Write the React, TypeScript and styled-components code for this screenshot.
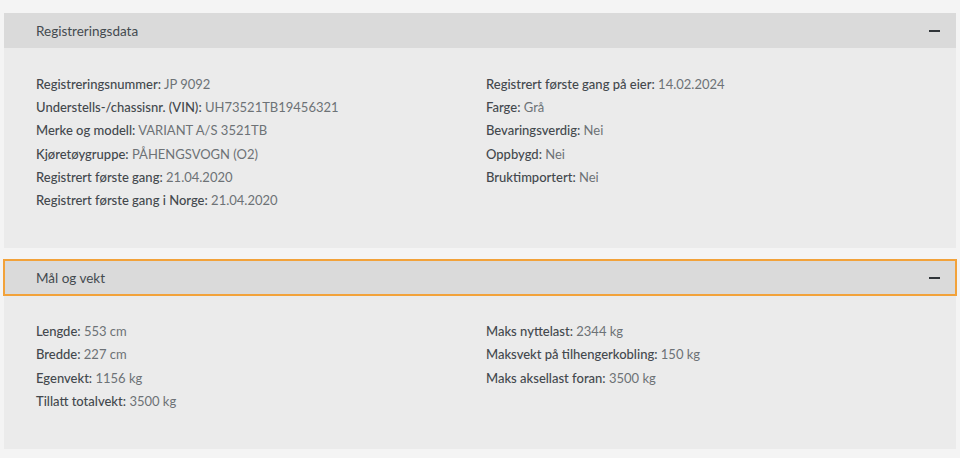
import React from "react";
import styled, { createGlobalStyle } from "styled-components";

const Global = createGlobalStyle`
  html, body { margin: 0; padding: 0; background: #f4f4f4; }
  body { font-family: Lato, "Noto Sans", sans-serif; }
`;

const Page = styled.div`
  padding: 13px 4px 10px 4px;
  display: flex;
  flex-direction: column;
  gap: 12px;
`;

const Section = styled.section`
  display: flex;
  flex-direction: column;
`;

const Header = styled.div<{ $focused?: boolean }>`
  position: relative;
  z-index: 1;
  height: 35px;
  background: #dadada;
  display: flex;
  align-items: center;
  justify-content: space-between;
  padding: 0 16px 0 32px;
  font-size: 13.5px;
  color: #444a4f;
  outline: ${(p) => (p.$focused ? "2px solid #f2a23a" : "none")};
  outline-offset: -1px;
`;

const Minus = styled.span`
  width: 11px;
  height: 2px;
  background: #2f3438;
`;

const Body = styled.div`
  background: #ebebeb;
  padding: 25px 32px 36px 32px;
  display: grid;
  grid-template-columns: 450px 1fr;
`;

const Column = styled.div`
  display: flex;
  flex-direction: column;
`;

const Row = styled.div`
  font-size: 13px;
  line-height: 23.2px;
  white-space: nowrap;
`;

const Label = styled.span`
  color: #43484d;
  font-weight: 500;
`;

const Value = styled.span`
  color: #6d7276;
  font-weight: 400;
`;

type Item = [string, string];

const sections: { title: string; focused?: boolean; left: Item[]; right: Item[] }[] = [
  {
    title: "Registreringsdata",
    left: [
      ["Registreringsnummer", "JP 9092"],
      ["Understells-/chassisnr. (VIN)", "UH73521TB19456321"],
      ["Merke og modell", "VARIANT A/S 3521TB"],
      ["Kjøretøygruppe", "PÅHENGSVOGN (O2)"],
      ["Registrert første gang", "21.04.2020"],
      ["Registrert første gang i Norge", "21.04.2020"],
    ],
    right: [
      ["Registrert første gang på eier", "14.02.2024"],
      ["Farge", "Grå"],
      ["Bevaringsverdig", "Nei"],
      ["Oppbygd", "Nei"],
      ["Bruktimportert", "Nei"],
    ],
  },
  {
    title: "Mål og vekt",
    focused: true,
    left: [
      ["Lengde", "553 cm"],
      ["Bredde", "227 cm"],
      ["Egenvekt", "1156 kg"],
      ["Tillatt totalvekt", "3500 kg"],
    ],
    right: [
      ["Maks nyttelast", "2344 kg"],
      ["Maksvekt på tilhengerkobling", "150 kg"],
      ["Maks aksellast foran", "3500 kg"],
    ],
  },
];

const Rows = ({ items }: { items: Item[] }) => (
  <Column>
    {items.map(([l, v]) => (
      <Row key={l}>
        <Label>{l}:</Label> <Value>{v}</Value>
      </Row>
    ))}
  </Column>
);

export default function App() {
  return (
    <>
      <Global />
      <Page>
        {sections.map((s) => (
          <Section key={s.title}>
            <Header $focused={s.focused}>
              <span>{s.title}</span>
              <Minus />
            </Header>
            <Body>
              <Rows items={s.left} />
              <Rows items={s.right} />
            </Body>
          </Section>
        ))}
      </Page>
    </>
  );
}
